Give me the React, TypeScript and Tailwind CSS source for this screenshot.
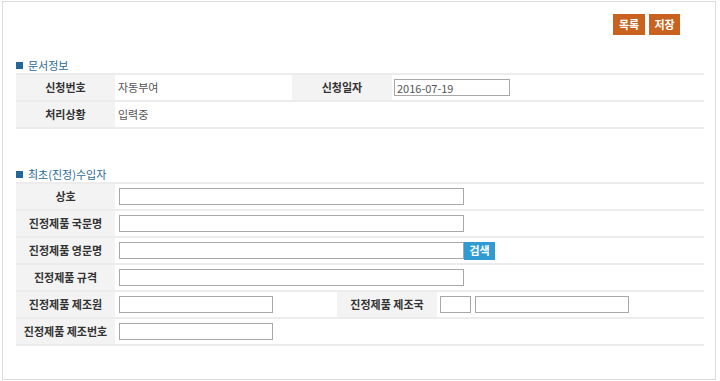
import React from 'react';

const font = "font-['Malgun_Gothic','Noto_Sans_CJK_KR',sans-serif]";

const SectionTitle: React.FC<{ title: string }> = ({ title }) => (
  <div className="flex h-[16px] items-center">
    <span className="mr-[5px] h-[7px] w-[7px] bg-[#22679c]" />
    <span className="text-[11px] leading-none text-[#2b6a98]">{title}</span>
  </div>
);

const Label: React.FC<{ text: string; w?: string }> = ({ text, w = 'w-[99px]' }) => (
  <div className={`${w} flex h-full shrink-0 items-center justify-center bg-[#f3f3f3] text-[11px] font-semibold text-[#333]`}>
    {text}
  </div>
);

const Input: React.FC<{ w: string; value?: string }> = ({ w, value }) => (
  <input
    readOnly
    value={value ?? ''}
    className={`${w} h-[17px] border border-[#a8a8a8] bg-white px-[2px] text-[11px] leading-none text-[#555] outline-none`}
  />
);

const Row: React.FC<{ children: React.ReactNode }> = ({ children }) => (
  <div className="flex h-[27px] items-center border-b-2 border-[#ececec]">{children}</div>
);

export default function App() {
  return (
    <div className={`h-[381px] w-[720px] bg-white ${font}`}>
      <div className="ml-[2px] mt-[1px] h-[379px] w-[714px] border border-[#dcdcdc] pl-[13px]">
        {/* top buttons */}
        <div className="flex w-[688px] justify-end gap-[4px] pr-[24px] pt-[12px]">
          <button className="flex h-[21px] w-[32px] items-center justify-center bg-[#c8621e] text-[11px] font-bold text-white">
            목록
          </button>
          <button className="flex h-[21px] w-[31px] items-center justify-center bg-[#c8621e] text-[11px] font-bold text-white">
            저장
          </button>
        </div>

        {/* 문서정보 */}
        <div className="mt-[22px] w-[688px]">
          <SectionTitle title="문서정보" />
          <div className="border-t-2 border-[#ececec]">
            <Row>
              <Label text="신청번호" />
              <div className="flex h-full w-[177px] items-center pl-[3px] text-[11px] text-[#555]">자동부여</div>
              <Label text="신청일자" w="w-[100px]" />
              <div className="flex h-full items-center pl-[2px]">
                <Input w="w-[116px]" value="2016-07-19" />
              </div>
            </Row>
            <Row>
              <Label text="처리상황" />
              <div className="flex h-full items-center pl-[3px] text-[11px] text-[#555]">입력중</div>
            </Row>
          </div>
        </div>

        {/* 최초(진정)수입자 */}
        <div className="mt-[37px] w-[688px]">
          <SectionTitle title="최초(진정)수입자" />
          <div className="border-t-2 border-[#ececec]">
            <Row>
              <Label text="상호" />
              <div className="flex h-full items-center pl-[4px]">
                <Input w="w-[345px]" />
              </div>
            </Row>
            <Row>
              <Label text="진정제품 국문명" />
              <div className="flex h-full items-center pl-[4px]">
                <Input w="w-[345px]" />
              </div>
            </Row>
            <Row>
              <Label text="진정제품 영문명" />
              <div className="flex h-full items-center pl-[4px]">
                <Input w="w-[345px]" />
                <button className="flex h-[18px] w-[31px] items-center justify-center bg-[#2f9bd2] text-[11px] font-bold text-white">
                  검색
                </button>
              </div>
            </Row>
            <Row>
              <Label text="진정제품 규격" />
              <div className="flex h-full items-center pl-[4px]">
                <Input w="w-[345px]" />
              </div>
            </Row>
            <Row>
              <Label text="진정제품 제조원" />
              <div className="flex h-full w-[222px] items-center pl-[4px]">
                <Input w="w-[154px]" />
              </div>
              <Label text="진정제품 제조국" w="w-[100px]" />
              <div className="flex h-full items-center gap-[4px] pl-[3px]">
                <Input w="w-[31px]" />
                <Input w="w-[154px]" />
              </div>
            </Row>
            <Row>
              <Label text="진정제품 제조번호" />
              <div className="flex h-full items-center pl-[4px]">
                <Input w="w-[154px]" />
              </div>
            </Row>
          </div>
        </div>
      </div>
    </div>
  );
}
